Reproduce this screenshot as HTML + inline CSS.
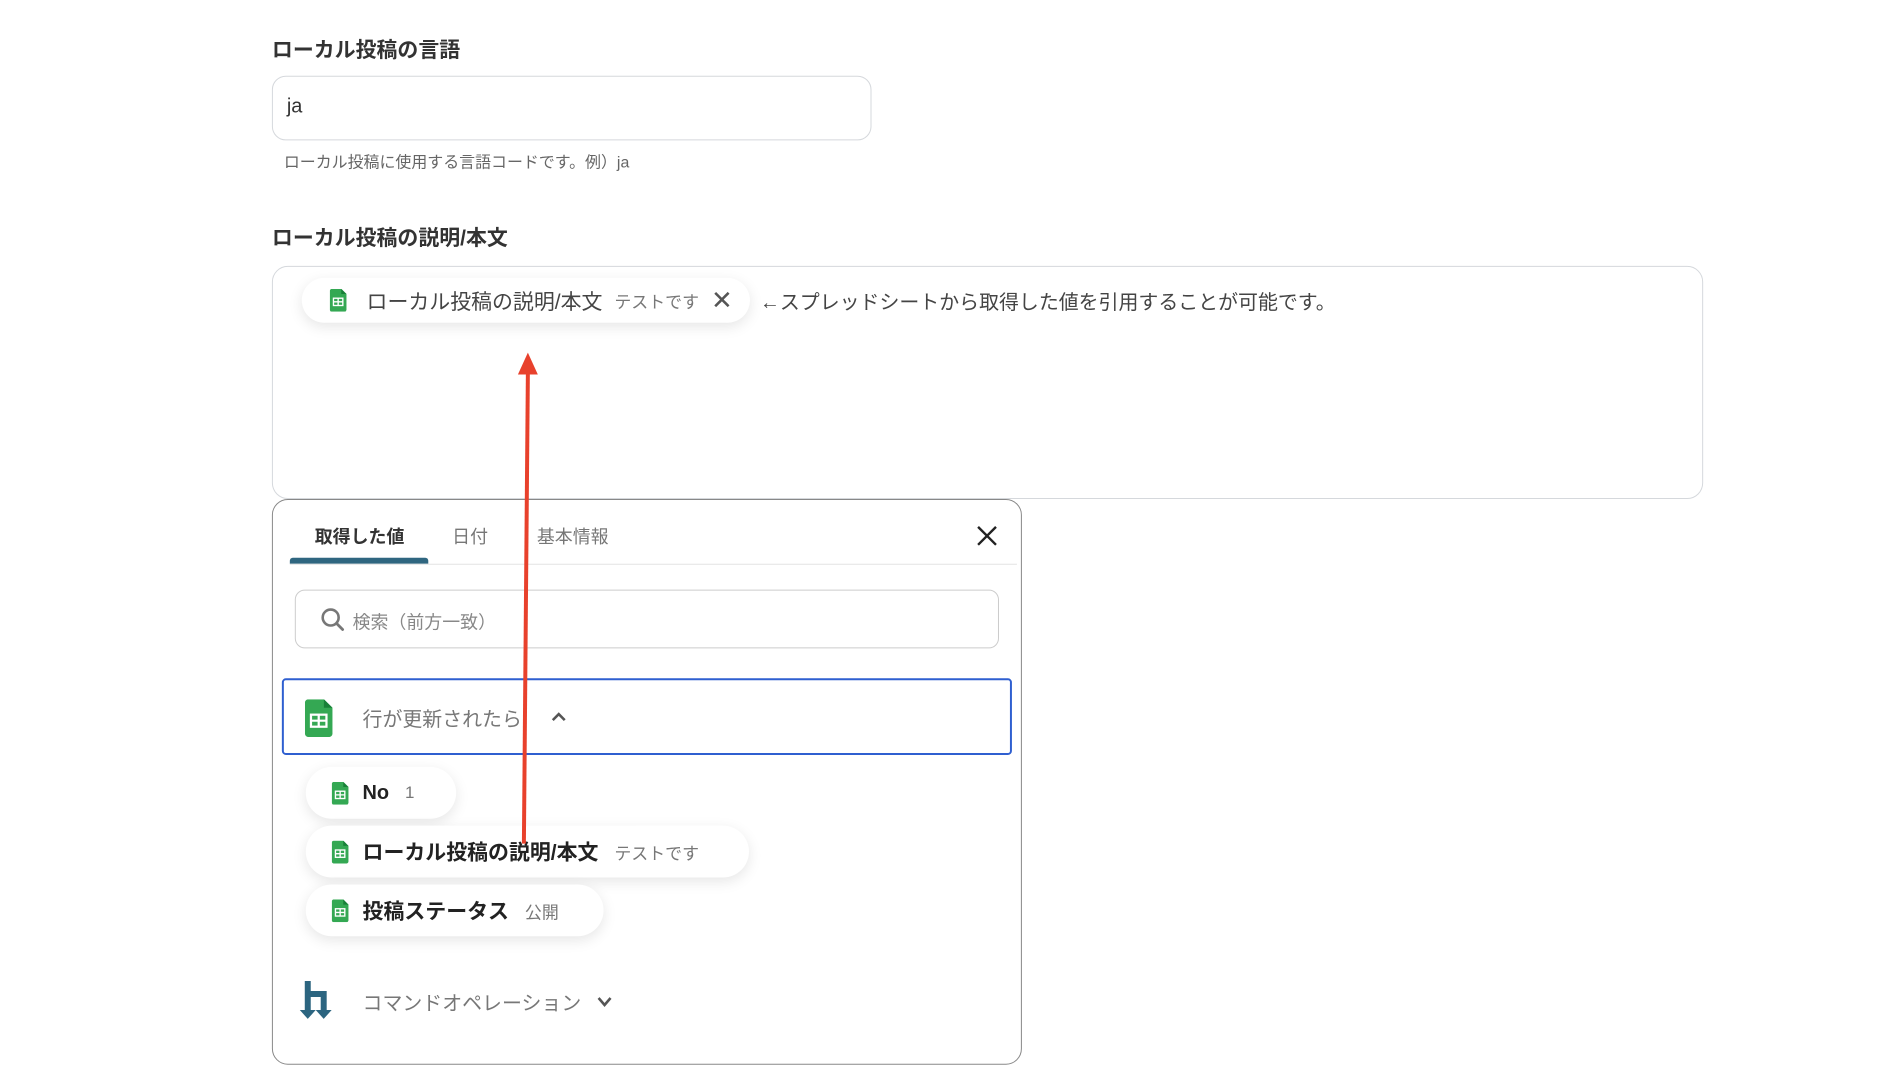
<!DOCTYPE html>
<html><head><meta charset="utf-8"><style>
*{box-sizing:border-box;margin:0;padding:0}
body{width:1880px;height:1070px;background:#fff;position:relative;overflow:hidden;font-family:"Liberation Sans","Noto Sans CJK JP",sans-serif;color:#333}
#w{position:absolute;left:0;top:0;width:1880px;height:1080px;transform:translate(-1px,-1px) scale(0.996);transform-origin:0 0}
.a{position:absolute}
.t{font-size:21px;font-weight:bold;color:#333}
.chip{position:absolute;background:#fff;border-radius:26px;box-shadow:0 4px 14px rgba(0,0,0,.10);display:flex;align-items:center;white-space:nowrap}
.sm{color:#777;font-size:17px}
</style></head><body>
<svg width="0" height="0" style="position:absolute"><defs>
<symbol id="sh" viewBox="0 0 16 22"><path d="M0 2a2 2 0 0 1 2-2h9l5 5v15a2 2 0 0 1-2 2H2a2 2 0 0 1-2-2z" fill="#34a853"/><path d="M11 0v5h5z" fill="#188038"/><rect x="3.5" y="9" width="9" height="7" fill="none" stroke="#fff" stroke-width="1.3"/><path d="M3.5 12.5h9M8 9v7" stroke="#fff" stroke-width="1.3"/></symbol>
</defs></svg>
<div id="w">
<div class="a t" style="left:274px;top:35px">ローカル投稿の言語</div>
<div class="a" style="left:274px;top:77px;width:602px;height:65px;border:1px solid #d5d8dc;border-radius:14px;font-size:20px;padding:19px 14px;color:#333">ja</div>
<div class="a" style="left:286px;top:150px;font-size:16px;color:#666">ローカル投稿に使用する言語コードです。例）ja</div>

<div class="a t" style="left:274px;top:224px">ローカル投稿の説明/本文</div>
<div class="a" style="left:274px;top:268px;width:1437px;height:234px;border:1px solid #d5d8dc;border-radius:16px"></div>
<div class="chip" style="left:304px;top:280px;width:450px;height:45px;padding-left:28px">
<svg width="17" height="23"><use href="#sh"/></svg>
<span style="font-size:21px;color:#444;margin-left:20px">ローカル投稿の説明/本文</span>
<span class="sm" style="margin-left:12px">テストです</span>
<span style="font-size:26px;color:#555;margin-left:12px;font-weight:300">✕</span>
</div>
<div class="a" style="left:764px;top:288px;font-size:20px;color:#444">←スプレッドシートから取得した値を引用することが可能です。</div>

<div class="a" style="left:274px;top:502px;width:753px;height:568px;border:1px solid #888;border-radius:16px;background:#fff"></div>
<div class="a" style="left:317px;top:526px;font-size:18px;font-weight:bold;color:#333">取得した値</div>
<div class="a" style="left:455px;top:526px;font-size:18px;color:#777">日付</div>
<div class="a" style="left:540px;top:526px;font-size:18px;color:#777">基本情報</div>
<div class="a" style="left:292px;top:561px;width:139px;height:6px;background:#2f6680;border-radius:3px 3px 0 0"></div>
<div class="a" style="left:292px;top:567px;width:730px;height:1px;background:#e3e3e3"></div>
<svg class="a" style="left:980px;top:527px" width="24" height="24"><path d="M3 3L21 21M21 3L3 21" stroke="#222" stroke-width="2.4"/></svg>

<div class="a" style="left:297px;top:593px;width:707px;height:59px;border:1px solid #ccc;border-radius:10px"></div>
<svg class="a" style="left:322px;top:610px" width="26" height="26"><circle cx="11" cy="11" r="8" fill="none" stroke="#777" stroke-width="2.6"/><path d="M17 17l6 6" stroke="#777" stroke-width="2.8" stroke-linecap="round"/></svg>
<div class="a" style="left:355px;top:612px;font-size:18px;color:#888">検索（前方一致）</div>

<div class="a" style="left:284px;top:682px;width:733px;height:77px;border:2.5px solid #2f5fd0;border-radius:4px"></div>
<svg class="a" style="left:307px;top:703px" width="28" height="38" viewBox="0 0 16 22"><use href="#sh"/></svg>
<div class="a" style="left:365px;top:707px;font-size:20px;color:#777">行が更新されたら</div>
<svg class="a" style="left:553px;top:714px" width="18" height="12"><path d="M3 10L9 4L15 10" fill="none" stroke="#555" stroke-width="2.6"/></svg>

<div class="chip" style="left:308px;top:771px;width:151px;height:52px;padding-left:26px">
<svg width="17" height="23"><use href="#sh"/></svg>
<span style="font-size:20px;font-weight:bold;color:#222;margin-left:14px">No</span><span class="sm" style="margin-left:16px">1</span></div>
<div class="chip" style="left:308px;top:830px;width:445px;height:52px;padding-left:26px">
<svg width="17" height="23"><use href="#sh"/></svg>
<span style="font-size:21px;font-weight:bold;color:#222;margin-left:14px">ローカル投稿の説明/本文</span><span class="sm" style="margin-left:16px">テストです</span></div>
<div class="chip" style="left:308px;top:889px;width:299px;height:52px;padding-left:26px">
<svg width="17" height="23"><use href="#sh"/></svg>
<span style="font-size:21px;font-weight:bold;color:#222;margin-left:14px">投稿ステータス</span><span class="sm" style="margin-left:16px">公開</span></div>

<svg class="a" style="left:300px;top:984px" width="44" height="42"><path d="M10 2v34M10 15h16v21" fill="none" stroke="#2c6580" stroke-width="6"/><path d="M2 31l8 9 8-9zM18 31l8 9 8-9z" fill="#2c6580"/></svg>
<div class="a" style="left:365px;top:992px;font-size:20px;color:#777">コマンドオペレーション</div>
<svg class="a" style="left:599px;top:1000px" width="18" height="14"><path d="M3 3L9 10L15 3" fill="none" stroke="#555" stroke-width="2.6"/></svg>

<svg class="a" style="left:0;top:0" width="1880" height="1070"><path d="M527 848L531 375" stroke="#e8412c" stroke-width="4"/><path d="M531 355L521 377H541Z" fill="#e8412c"/></svg>
</div>
</body></html>
